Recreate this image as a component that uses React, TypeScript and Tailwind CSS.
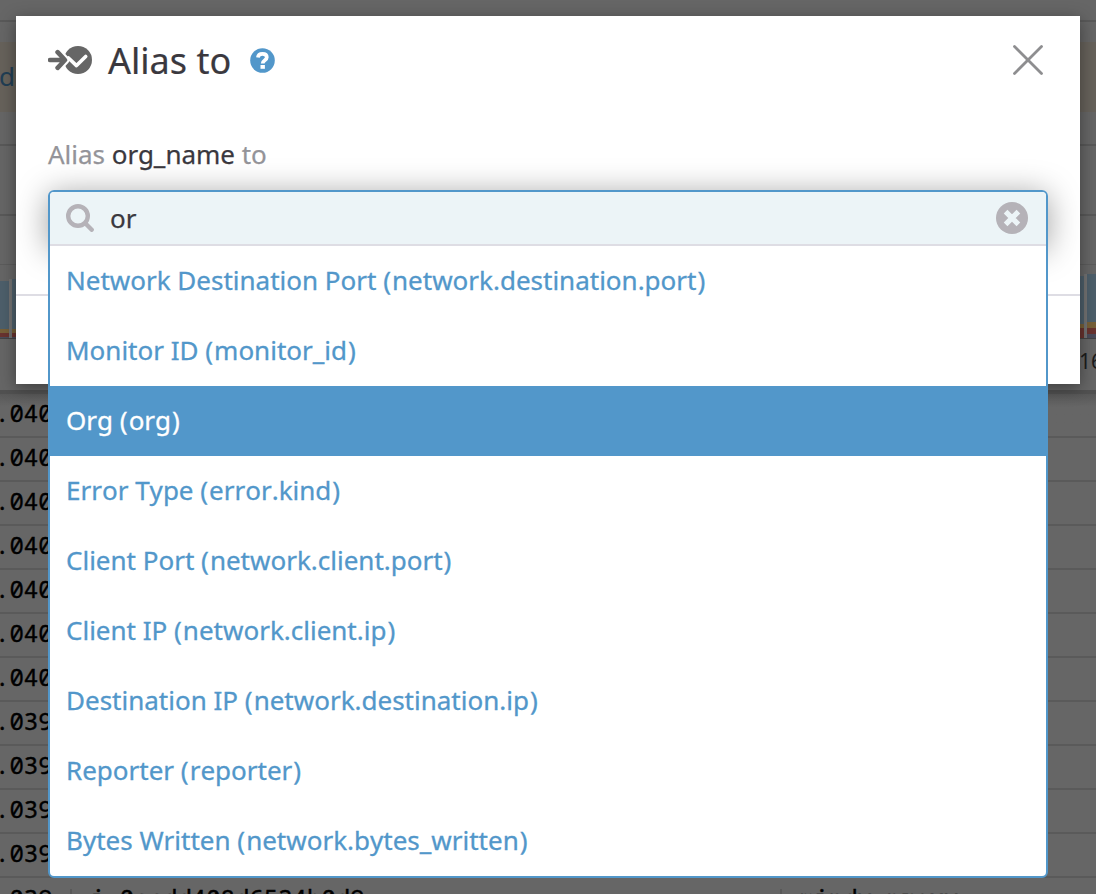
import React from 'react';

const options = [
  ['Network Destination Port', 'network.destination.port'],
  ['Monitor ID', 'monitor_id'],
  ['Org', 'org'],
  ['Error Type', 'error.kind'],
  ['Client Port', 'network.client.port'],
  ['Client IP', 'network.client.ip'],
  ['Destination IP', 'network.destination.ip'],
  ['Reporter', 'reporter'],
  ['Bytes Written', 'network.bytes_written'],
];

const stamps = ['.040', '.040', '.040', '.040', '.040', '.040', '.040', '.039', '.039', '.039', '.039'];

function AliasIcon() {
  return (
    <svg className="h-7 w-11 shrink-0" viewBox="0 0 44 28" fill="none">
      <circle cx="30" cy="14" r="14" fill="#666" />
      <path d="M9.5 5.5 17.5 14l-8 8.5" stroke="#fff" strokeWidth="8" strokeLinecap="round" strokeLinejoin="round" />
      <path d="M2 14h14M9.6 6.2 17 14l-7.4 7.8" stroke="#666" strokeWidth="4.6" strokeLinejoin="round" strokeLinecap="round" />
      <path d="m20.5 12 8 7.6 9.2-9.2" stroke="#fff" strokeWidth="3.6" strokeLinecap="round" strokeLinejoin="round" />
    </svg>
  );
}

function HelpIcon() {
  return (
    <svg className="size-[25px] shrink-0" viewBox="0 0 25 25" fill="none">
      <circle cx="12.5" cy="12.5" r="12.3" fill="#5297ca" />
      <path d="M7.9 9.6c.3-2.4 2-3.7 4.5-3.7 2.6 0 4.4 1.3 4.4 3.4 0 3-4.1 2.8-4.1 6.1" stroke="#fff" strokeWidth="3.7" />
      <path d="M10.5 17h4.4v3.8h-4.4z" fill="#fff" />
    </svg>
  );
}

function Backdrop() {
  return (
    <div className="flex h-full flex-col bg-[#666]">
      <div className="h-[22px] shrink-0 border-b-2 border-[#595959]" />
      <div className="h-5 shrink-0" />
      <div className="flex h-[70px] shrink-0 items-center bg-[#67625b] pb-0.5 text-[26px] text-[#213e54]">
        <span className="-ml-px">d</span>
      </div>
      <div className="h-[34px] shrink-0 border-b-2 border-[#595959]" />
      <div className="h-[70px] shrink-0 border-b-2 border-[#595959]" />
      <div className="h-[49px] shrink-0 border-b border-[#5c5c5c]" />
      <div className="flex h-[74px] shrink-0 items-end justify-between border-b border-[#444]">
        <div className="flex items-end gap-[3px] bg-[#727272]">
          <div className="w-[9px]">
            <div className="h-0.5 bg-[#666]" />
            <div className="h-12 bg-[#4d5f6b]" />
            <div className="h-1 bg-[#776038]" />
            <div className="h-1 bg-[#69332f]" />
            <div className="h-px bg-[#4b4c5b]" />
          </div>
          <div className="w-4">
            <div className="h-[50px] bg-[#4d5f6b]" />
            <div className="h-1 bg-[#776038]" />
            <div className="h-1 bg-[#69332f]" />
            <div className="h-px bg-[#4b4c5b]" />
          </div>
        </div>
        <div className="flex items-end gap-[3px] bg-[#727272]">
          <div className="w-4">
            <div className="h-0.5 bg-[#666]" />
            <div className="h-12 bg-[#4d5f6b]" />
            <div className="h-1 bg-[#776038]" />
            <div className="h-2.5 bg-[#69332f]" />
          </div>
          <div className="w-[9px]">
            <div className="h-12 bg-[#4d5f6b]" />
            <div className="h-1.5 bg-[#776038]" />
            <div className="h-1.5 bg-[#69332f]" />
            <div className="h-1 bg-[#4b4c5b]" />
          </div>
        </div>
      </div>
      <div className="flex h-[51px] shrink-0 justify-end overflow-hidden pt-[7px] text-[21px] text-[#1c1c1c]">
        <span className="-mr-[7px]">16</span>
      </div>
      <div className="h-1 shrink-0 bg-[#515151]" />
      {stamps.map((stamp, i) => (
        <div
          key={i}
          className={
            'flex shrink-0 items-center border-b-2 border-[#5a5a5a] pb-1 ' +
            (i === 0 ? 'h-11 bg-linear-to-b from-[#595959] to-[#666] to-30%' : 'h-11')
          }
        >
          <span className="-ml-[5px] font-['Noto_Sans_Mono','DejaVu_Sans_Mono',monospace] text-2xl text-black [-webkit-text-stroke:0.4px_black]">
            {stamp}
          </span>
        </div>
      ))}
      <div className="flex h-[42px] shrink-0 items-center font-['Noto_Sans_Mono','DejaVu_Sans_Mono',monospace] text-2xl text-black [-webkit-text-stroke:0.4px_black]">
        <span className="-ml-[5px] w-[75px] pb-[3px]">.039</span>
        <span className="h-5 w-0.5 bg-[#595959]" />
        <span className="ml-[19px] w-[689px] pb-[3px]">i-0acdd408d6524b0d9</span>
        <span className="h-5 w-0.5 bg-[#595959]" />
        <span className="ml-[18px] pb-[3px]">mindy-proxy</span>
      </div>
    </div>
  );
}

export default function App() {
  return (
    <div className="relative h-[894px] w-[1096px] overflow-hidden font-['Noto_Sans',sans-serif]">
      <Backdrop />
      <div className="absolute inset-x-4 top-4 h-[368px] bg-white shadow-[0_4px_16px_rgba(0,0,0,0.4)]" role="dialog">
        <div className="flex h-full flex-col overflow-hidden">
          <header className="flex h-[88px] items-center pr-9 pl-8">
            <AliasIcon />
            <h1 className="mr-[19px] ml-4 pt-0.5 text-[36px] leading-[86px] text-[#3a383e] [-webkit-text-stroke:0.2px_#3a383e]">Alias to</h1>
            <HelpIcon />
            <svg className="ml-auto size-8" viewBox="0 0 32 32" stroke="#8e8e90" strokeWidth="2.8" strokeLinecap="round">
              <path d="m2.5 2.5 27 27M29.5 2.5l-27 27" />
            </svg>
          </header>
          <p className="mt-8 ml-8 text-[26px] leading-9 tracking-[-0.02px] whitespace-nowrap text-[#949499] [-webkit-text-stroke:0.25px_currentColor]">
            Alias <span className="text-[#3a383e]">org_name</span> to
          </p>
          <div className="mx-8 mt-[18px] h-14 shrink-0 rounded-t-md shadow-[0_4px_32px_rgba(0,0,0,0.38)]" />
          <footer className="relative mt-12 h-[90px] shrink-0 border-t-2 border-[#dedde4] bg-white" />
        </div>
        <div className="absolute top-[174px] left-8 w-[1000px] overflow-hidden rounded-md border-2 border-[#5297ca] bg-white">
          <div className="flex h-[54px] items-center border-b-2 border-[#dedde4] bg-[#ecf4f7] pr-[18px] pl-4">
            <svg className="size-7" viewBox="0 0 28 28" fill="none" stroke="#b5b2b8" strokeWidth="4.4" strokeLinecap="round">
              <circle cx="12" cy="12" r="9.8" />
              <path d="m19.5 19.5 6.2 6.2" />
            </svg>
            <span className="ml-4 text-[26px] text-[#3a383e] [-webkit-text-stroke:0.25px_currentColor]">or</span>
            <svg className="ml-auto size-8" viewBox="0 0 32 32">
              <circle cx="16" cy="16" r="16" fill="#b5b2b8" />
              <path d="m9.6 9.6 12.8 12.8M22.4 9.6 9.6 22.4" stroke="#ecf4f7" strokeWidth="5.2" />
            </svg>
          </div>
          <ul className="[font-kerning:none]">
            {options.map(([label, path]) => (
              <li
                key={path}
                className={
                  'h-[70px] px-4 text-[26px] leading-[68px] [-webkit-text-stroke:0.3px_currentColor] ' +
                  (path === 'org' ? 'bg-[#5297ca] text-white' : 'text-[#5297ca]')
                }
              >
                {label} <span className="tracking-[1px]">(</span>
                {path}
                <span className="ml-px">)</span>
              </li>
            ))}
          </ul>
        </div>
      </div>
    </div>
  );
}
